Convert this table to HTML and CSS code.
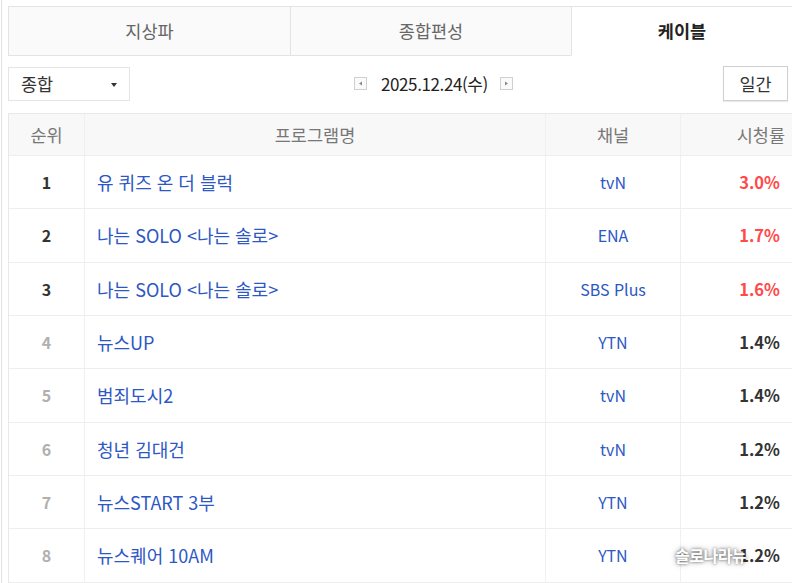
FILE: index.html
```html
<!DOCTYPE html>
<html lang="ko">
<head>
<meta charset="utf-8">
<link rel="stylesheet" href="styles.css">
</head>
<body>
<div class="page">
  <div class="tabs">
    <div class="tab t1">지상파</div>
    <div class="tab t2">종합편성</div>
    <div class="tab t3 active">케이블</div>
  </div>
  <div class="toolbar">
    <div class="select">종합<span class="caret"></span></div>
    <div class="date">
      <span class="arr"><svg width="13" height="13" viewBox="0 0 13 13"><rect x="0.5" y="0.5" width="12" height="12" fill="#fafafa" stroke="#d0d0d0"/><path d="M5 6.5 L8 4.5 L8 8.5 Z" fill="#888"/></svg></span>
      <span class="dtext">2025.12.24(수)</span>
      <span class="arr"><svg width="13" height="13" viewBox="0 0 13 13"><rect x="0.5" y="0.5" width="12" height="12" fill="#fafafa" stroke="#d0d0d0"/><path d="M8 6.5 L5 4.5 L5 8.5 Z" fill="#888"/></svg></span>
    </div>
    <div class="btn">일간</div>
  </div>
  <div class="table">
    <div class="row head">
      <div class="c rank">순위</div>
      <div class="c prog">프로그램명</div>
      <div class="c ch">채널</div>
      <div class="c rate">시청률</div>
    </div>
    <div class="row"><div class="c rank top">1</div><div class="c prog">유 퀴즈 온 더 블럭</div><div class="c ch">tvN</div><div class="c rate red">3.0%</div></div>
    <div class="row"><div class="c rank top">2</div><div class="c prog">나는 SOLO &lt;나는 솔로&gt;</div><div class="c ch">ENA</div><div class="c rate red">1.7%</div></div>
    <div class="row"><div class="c rank top">3</div><div class="c prog">나는 SOLO &lt;나는 솔로&gt;</div><div class="c ch">SBS Plus</div><div class="c rate red">1.6%</div></div>
    <div class="row"><div class="c rank">4</div><div class="c prog">뉴스UP</div><div class="c ch">YTN</div><div class="c rate">1.4%</div></div>
    <div class="row"><div class="c rank">5</div><div class="c prog">범죄도시2</div><div class="c ch">tvN</div><div class="c rate">1.4%</div></div>
    <div class="row"><div class="c rank">6</div><div class="c prog">청년 김대건</div><div class="c ch">tvN</div><div class="c rate">1.2%</div></div>
    <div class="row"><div class="c rank">7</div><div class="c prog">뉴스START 3부</div><div class="c ch">YTN</div><div class="c rate">1.2%</div></div>
    <div class="row"><div class="c rank">8</div><div class="c prog">뉴스퀘어 10AM</div><div class="c ch">YTN</div><div class="c rate">1.2%</div></div>
  </div>
  <div class="watermark">솔로나라뉴</div>
</div>
</body>
</html>
```
FILE: styles.css
```css
* { box-sizing: border-box; }
html, body { margin: 0; padding: 0; background: #fff; }
body {
  font-family: "Noto Sans CJK KR", "Noto Sans", sans-serif;
  color: #333;
  overflow: hidden;
  width: 792px;
  height: 583px;
}
.page {
  position: relative;
  margin-left: 1px;
  border-left: 1px solid #e2e2e2;
  padding-left: 6px;
  padding-top: 6px;
  height: 583px;
  width: 791px;
}
.tabs {
  display: flex;
  height: 50px;
  border-top: 1px solid #e3e3e3;
}
.tab {
  display: flex;
  align-items: center;
  justify-content: center;
  font-size: 17.5px;
  color: #666;
  background: #fafafa;
  border-left: 1px solid #e3e3e3;
  border-bottom: 1px solid #e3e3e3;
  padding-bottom: 2px;
}
.t1 { width: 282px; }
.t2 { width: 281px; }
.t3 { flex: 1; }
.tab.active {
  background: #fff;
  border-bottom-color: transparent;
  color: #222;
  font-weight: 700;
}
.toolbar {
  display: flex;
  align-items: center;
  margin-top: 10px;
  height: 35px;
}
.select {
  position: relative;
  width: 122px;
  height: 34px;
  border: 1px solid #e5e5e5;
  display: flex;
  align-items: center;
  padding-left: 12px;
  font-size: 17.5px;
  color: #333;
}
.caret {
  position: absolute;
  right: 12px;
  top: 15px;
  width: 0;
  height: 0;
  border-left: 3.5px solid transparent;
  border-right: 3.5px solid transparent;
  border-top: 4px solid #333;
}
.date {
  display: flex;
  align-items: center;
  margin-left: 224px;
  height: 34px;
}
.arr { display: flex; width: 13px; height: 13px; }
.dtext {
  font-size: 17px;
  color: #222;
  margin: 0 12px 0 14px;
  letter-spacing: -0.4px;
}
.btn {
  margin-left: auto;
  margin-right: 4px;
  width: 65px;
  height: 35px;
  border: 1px solid #cfcfcf;
  box-shadow: 0 1px 1px rgba(0,0,0,0.08);
  display: flex;
  align-items: center;
  justify-content: center;
  font-size: 17.5px;
  color: #333;
}
.table {
  margin-top: 12px;
  border-top: 1px solid #e8e8e8;
  border-left: 1px solid #e8e8e8;
}
.row {
  display: grid;
  grid-template-columns: 75px 461px 135px 120px;
  height: 53.33px;
  border-bottom: 1px solid #eee;
}
.row.head {
  height: 42px;
  background: #f8f8f8;
}
.c {
  display: flex;
  align-items: center;
  font-size: 16px;
  border-left: 1px solid #f0f0f0;
}
.c:first-child { border-left: none; }
.head .c {
  color: #777;
  justify-content: center;
  font-weight: 400;
  font-size: 17.5px;
  padding-left: 0;
}
.head .rate { justify-content: flex-end; padding-right: 15px; }
.rank {
  justify-content: center;
  font-weight: 700;
  font-size: 16px;
  color: #b0b0b0;
}
.rank.top { color: #333; }
.prog {
  padding-left: 12px;
  color: #2d57c4;
  font-size: 18px;
}
.ch {
  justify-content: center;
  color: #2d57c4;
}
.rate {
  justify-content: flex-end;
  padding-right: 20px;
  font-weight: 700;
  font-size: 16.5px;
  color: #333;
}
.rate.red { color: #ff4a4a; }
.watermark {
  position: absolute;
  left: 673px;
  top: 543px;
  font-size: 16px;
  font-weight: 700;
  color: #fff;
  text-shadow: 0 0 3px rgba(0,0,0,0.55), 0 0 6px rgba(0,0,0,0.35);
  letter-spacing: -0.5px;
}
```
